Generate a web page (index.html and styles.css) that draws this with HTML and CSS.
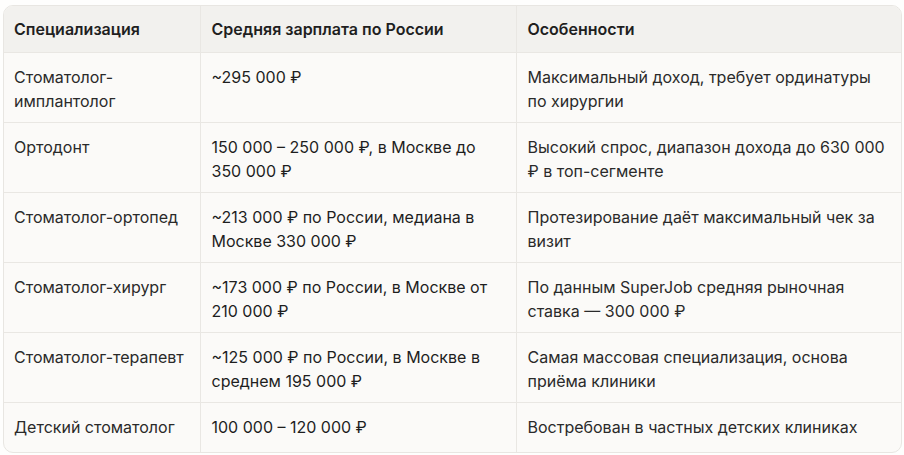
FILE: index.html
```html
<!DOCTYPE html>
<html lang="ru">
<head>
<meta charset="utf-8">
<link rel="stylesheet" href="styles.css">
</head>
<body>
<div class="wrap">
<table class="tbl">
<colgroup><col class="c1"><col class="c2"><col class="c3"></colgroup>
<thead>
<tr><th>Специализация</th><th>Средняя зарплата по России</th><th>Особенности</th></tr>
</thead>
<tbody>
<tr><td>Стоматолог-имплантолог</td><td>~295&nbsp;000&nbsp;₽</td><td>Максимальный доход, требует ординатуры по хирургии</td></tr>
<tr><td>Ортодонт</td><td>150&nbsp;000&nbsp;–&nbsp;250&nbsp;000&nbsp;₽, в Москве до 350&nbsp;000&nbsp;₽</td><td>Высокий спрос, диапазон дохода до 630&nbsp;000 ₽ в топ-сегменте</td></tr>
<tr><td>Стоматолог-ортопед</td><td>~213&nbsp;000&nbsp;₽ по России, медиана в Москве 330&nbsp;000&nbsp;₽</td><td>Протезирование даёт максимальный чек за визит</td></tr>
<tr><td>Стоматолог-хирург</td><td>~173&nbsp;000&nbsp;₽ по России, в Москве от 210&nbsp;000&nbsp;₽</td><td>По данным SuperJob средняя рыночная ставка&nbsp;—&nbsp;300&nbsp;000&nbsp;₽</td></tr>
<tr><td>Стоматолог-терапевт</td><td>~125&nbsp;000&nbsp;₽ по России, в Москве в среднем 195&nbsp;000&nbsp;₽</td><td>Самая массовая специализация, основа приёма клиники</td></tr>
<tr class="last"><td>Детский стоматолог</td><td>100&nbsp;000&nbsp;–&nbsp;120&nbsp;000&nbsp;₽</td><td>Востребован в частных детских клиниках</td></tr>
</tbody>
</table>
</div>
</body>
</html>
```
FILE: styles.css
```css
html, body {
  margin: 0;
  padding: 0;
  background: #fefefd;
}
body {
  font-family: "Inter", "Noto Sans", sans-serif;
  font-size: 16px;
  color: #2a2a2a;
}
.wrap {
  margin: 5px 2px 3px 3px;
  border: 1px solid #e8e6e2;
  border-radius: 10px;
  overflow: hidden;
  background: #fbfaf8;
}
.tbl {
  width: 100%;
  border-collapse: collapse;
  table-layout: fixed;
}
.c1 { width: 196px; }
.c2 { width: 316px; }
.c3 { width: auto; }
.tbl th, .tbl td {
  text-align: left;
  vertical-align: top;
  padding: 12px 12px 9px 11px;
  line-height: 24px;
  border-left: 1px solid #e9e7e3;
  border-top: 1px solid #e9e7e3;
}
.tbl th:first-child, .tbl td:first-child { border-left: none; padding-left: 10px; }
.tbl thead th {
  border-top: none;
  padding-top: 11px;
  padding-bottom: 11px;
  background: #f2f1ee;
  font-weight: 600;
  color: #1f1f1f;
}
.tbl .last td { padding-bottom: 13px; }
.tbl td:nth-child(2) { color: #1e1e1e; }
```
